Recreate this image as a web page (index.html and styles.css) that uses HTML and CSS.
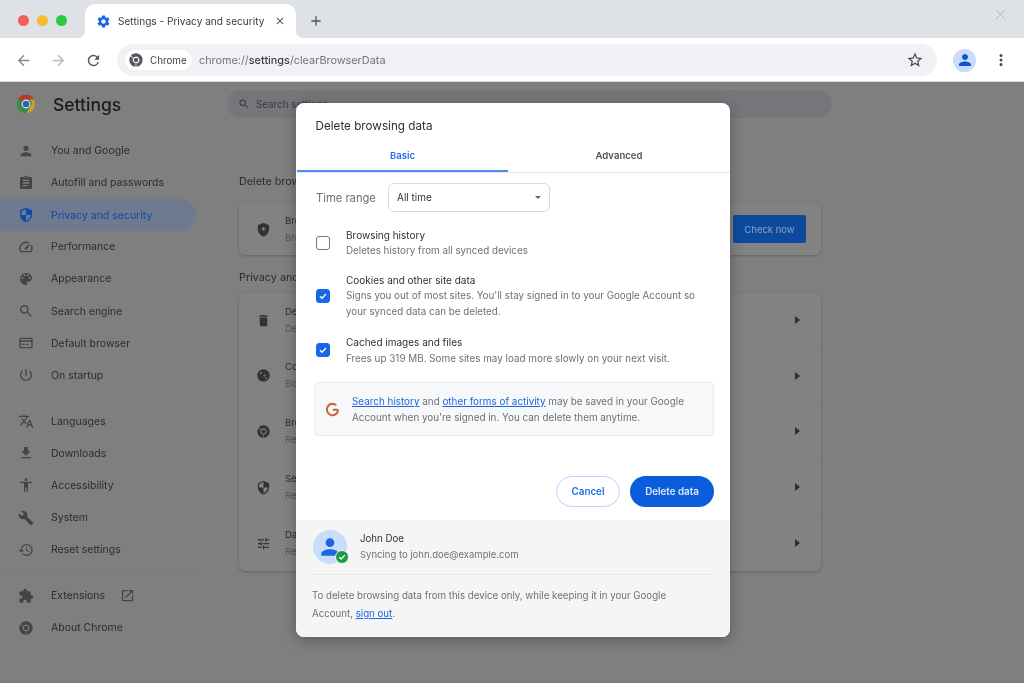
FILE: index.html
```html
<!DOCTYPE html>
<html lang="en">
<head>
<meta charset="utf-8">
<title>Settings - Privacy and security</title>
<link rel="stylesheet" href="styles.css">
</head>
<body>
<svg class="defs" width="0" height="0" aria-hidden="true">
  <symbol id="i-person" viewBox="0 0 24 24"><path d="M12 12c2.21 0 4-1.79 4-4s-1.79-4-4-4-4 1.79-4 4 1.79 4 4 4zm0 2c-2.67 0-8 1.34-8 4v2h16v-2c0-2.66-5.33-4-8-4z"/></symbol>
  <symbol id="i-assign" viewBox="0 0 24 24"><path d="M19 3h-4.18C14.4 1.84 13.3 1 12 1c-1.3 0-2.4.84-2.82 2H5c-1.1 0-2 .9-2 2v14c0 1.1.9 2 2 2h14c1.1 0 2-.9 2-2V5c0-1.1-.9-2-2-2zm-7 0c.55 0 1 .45 1 1s-.45 1-1 1-1-.45-1-1 .45-1 1-1zm2 14H7v-2h7v2zm3-4H7v-2h10v2zm0-4H7V7h10v2z"/></symbol>
  <symbol id="i-security" viewBox="0 0 24 24"><path d="M12 1L3 5v6c0 5.55 3.84 10.74 9 12 5.16-1.26 9-6.45 9-12V5l-9-4zm0 10.99h7c-.53 4.12-3.28 7.79-7 8.94V12H5V6.3l7-3.11v8.8z"/></symbol>
  <symbol id="i-speed" viewBox="0 0 24 24"><path d="M20.38 8.57l-1.23 1.85a8 8 0 0 1-.22 7.58H5.07A8 8 0 0 1 15.58 6.85l1.85-1.23A10 10 0 0 0 3.35 19a2 2 0 0 0 1.72 1h13.85a2 2 0 0 0 1.74-1 10 10 0 0 0-.27-10.44zm-9.79 6.84a2 2 0 0 0 2.83 0l5.66-8.49-8.49 5.66a2 2 0 0 0 0 2.83z"/></symbol>
  <symbol id="i-palette" viewBox="0 0 24 24"><path d="M12 3a9 9 0 0 0 0 18c.83 0 1.5-.67 1.5-1.5 0-.39-.15-.74-.39-1.01-.23-.26-.38-.61-.38-.99 0-.83.67-1.5 1.5-1.5H16c2.76 0 5-2.24 5-5 0-4.42-4.03-8-9-8zm-5.5 9c-.83 0-1.5-.67-1.5-1.5S5.67 9 6.5 9 8 9.67 8 10.5 7.33 12 6.5 12zm3-4C8.67 8 8 7.33 8 6.5S8.67 5 9.5 5s1.5.67 1.5 1.5S10.33 8 9.5 8zm5 0c-.83 0-1.5-.67-1.5-1.5S13.67 5 14.5 5s1.5.67 1.5 1.5S15.33 8 14.5 8zm3 4c-.83 0-1.5-.67-1.5-1.5S16.67 9 17.5 9s1.5.67 1.5 1.5-.67 1.5-1.5 1.5z"/></symbol>
  <symbol id="i-search" viewBox="0 0 24 24"><path d="M15.5 14h-.79l-.28-.27A6.47 6.47 0 0 0 16 9.5 6.5 6.5 0 1 0 9.5 16c1.61 0 3.09-.59 4.23-1.57l.27.28v.79l5 4.99L20.49 19l-4.99-5zm-6 0C7.01 14 5 11.99 5 9.5S7.01 5 9.5 5 14 7.01 14 9.5 11.99 14 9.5 14z"/></symbol>
  <symbol id="i-web" viewBox="0 0 24 24"><path d="M20 4H4c-1.1 0-1.99.9-1.99 2L2 18c0 1.1.9 2 2 2h16c1.1 0 2-.9 2-2V6c0-1.1-.9-2-2-2zm0 14H4v-8h16v8zm0-10H4V6h16v2zM6 13h4v2H6zm6 0h4v2h-4z"/></symbol>
  <symbol id="i-power" viewBox="0 0 24 24"><path d="M13 3h-2v10h2V3zm4.83 2.17l-1.42 1.42A6.92 6.92 0 0 1 19 12c0 3.87-3.13 7-7 7A6.995 6.995 0 0 1 7.58 6.58L6.17 5.17A8.932 8.932 0 0 0 3 12a9 9 0 0 0 18 0c0-2.74-1.23-5.18-3.17-6.83z"/></symbol>
  <symbol id="i-translate" viewBox="0 0 24 24"><path d="M12.87 15.07l-2.54-2.51.03-.03A17.52 17.52 0 0 0 14.07 6H17V4h-7V2H8v2H1v2h11.17C11.5 7.92 10.44 9.75 9 11.35 8.07 10.32 7.3 9.19 6.69 8h-2c.73 1.63 1.73 3.17 2.98 4.56l-5.09 5.02L4 19l5-5 3.11 3.11.76-2.04zM18.5 10h-2L12 22h2l1.12-3h4.75L21 22h2l-4.5-12zm-2.62 7l1.62-4.33L19.12 17h-3.24z"/></symbol>
  <symbol id="i-download" viewBox="0 0 24 24"><path d="M19 9h-4V3H9v6H5l7 7 7-7zM5 18v2h14v-2H5z"/></symbol>
  <symbol id="i-access" viewBox="0 0 24 24"><path d="M12 2c1.1 0 2 .9 2 2s-.9 2-2 2-2-.9-2-2 .9-2 2-2zm9 7h-6v13h-2v-6h-2v6H9V9H3V7h18v2z"/></symbol>
  <symbol id="i-wrench" viewBox="0 0 24 24"><path d="M22.7 19l-9.1-9.1c.9-2.3.4-5-1.5-6.9-2-2-5-2.4-7.4-1.3L9 6 6 9 1.6 4.7C.4 7.1.9 10.1 2.9 12.1c1.9 1.9 4.6 2.4 6.9 1.5l9.1 9.1c.4.4 1 .4 1.4 0l2.3-2.3c.5-.4.5-1.1.1-1.4z"/></symbol>
  <symbol id="i-restore" viewBox="0 0 24 24"><path d="M13 3a9 9 0 0 0-9 9H1l3.89 3.89.07.14L9 12H6c0-3.87 3.13-7 7-7s7 3.13 7 7-3.13 7-7 7c-1.93 0-3.68-.79-4.94-2.06l-1.42 1.42A8.954 8.954 0 0 0 13 21a9 9 0 0 0 0-18zm-1 5v5l4.28 2.54.72-1.21-3.5-2.08V8H12z"/></symbol>
  <symbol id="i-ext" viewBox="0 0 24 24"><path d="M20.5 11H19V7c0-1.1-.9-2-2-2h-4V3.5a2.5 2.5 0 0 0-5 0V5H4c-1.1 0-1.99.9-1.99 2v3.8H3.5c1.49 0 2.7 1.21 2.7 2.7s-1.21 2.7-2.7 2.7H2V20c0 1.1.9 2 2 2h3.8v-1.5c0-1.49 1.21-2.7 2.7-2.7 1.49 0 2.7 1.21 2.7 2.7V22H17c1.1 0 2-.9 2-2v-4h1.5a2.5 2.5 0 0 0 0-5z"/></symbol>
  <symbol id="i-open" viewBox="0 0 24 24"><path d="M19 19H5V5h7V3H5a2 2 0 0 0-2 2v14a2 2 0 0 0 2 2h14c1.1 0 2-.9 2-2v-7h-2v7zM14 3v2h3.59l-9.83 9.83 1.41 1.41L19 6.41V10h2V3h-7z"/></symbol>
  <symbol id="i-chrome" viewBox="0 0 24 24"><circle cx="12" cy="12" r="7.500" fill="none" stroke="currentColor" stroke-width="5" stroke-dasharray="14.700 1" transform="rotate(-28 12 12)"/><circle cx="12" cy="12" r="3.400" fill="currentColor"/></symbol>
  <symbol id="i-delete" viewBox="0 0 24 24"><path d="M6 19c0 1.1.9 2 2 2h8c1.1 0 2-.9 2-2V7H6v12zM19 4h-3.5l-1-1h-5l-1 1H5v2h14V4z"/></symbol>
  <symbol id="i-cookie" viewBox="0 0 24 24"><path fill-rule="evenodd" d="M12 2a10 10 0 1 0 0 20 10 10 0 0 0 0-20zM8 6.500a1.500 1.500 0 1 1 0 3 1.500 1.500 0 0 1 0-3zm5.500 4a1.600 1.600 0 1 1 0 3.200 1.600 1.600 0 0 1 0-3.200zm3 4.500a1.500 1.500 0 1 1 0 3 1.500 1.500 0 0 1 0-3z"/></symbol>
  <symbol id="i-shield" viewBox="0 0 24 24"><path fill-rule="evenodd" d="M12 1L3 5v6c0 5.550 3.840 10.740 9 12 5.160-1.260 9-6.450 9-12V5l-9-4zm-1 9V8h2v2h2v2h-2v2h-2v-2H9v-2z"/></symbol>
  <symbol id="i-tune" viewBox="0 0 24 24"><path d="M3 17v2h6v-2H3zM3 5v2h10V5H3zm10 16v-2h8v-2h-8v-2h-2v6h2zM7 9v2H3v2h4v2h2V9H7zm14 4v-2H11v2h10zm-6-4h2V7h4V5h-4V3h-2v6z"/></symbol>
  <symbol id="i-star" viewBox="0 0 24 24"><path d="M22 9.24l-7.19-.62L12 2 9.19 8.63 2 9.24l5.46 4.73L5.82 21 12 17.27 18.18 21l-1.63-7.03L22 9.24zM12 15.4l-3.76 2.27 1-4.28-3.32-2.88 4.38-.38L12 6.1l1.71 4.04 4.38.38-3.32 2.88 1 4.28L12 15.4z"/></symbol>
  <symbol id="i-gear" viewBox="0 0 24 24"><path d="M19.14 12.94c.04-.3.06-.61.06-.94 0-.32-.02-.64-.07-.94l2.03-1.58a.49.49 0 0 0 .12-.61l-1.92-3.32a.488.488 0 0 0-.59-.22l-2.39.96c-.5-.38-1.03-.7-1.62-.94l-.36-2.54a.484.484 0 0 0-.48-.41h-3.84c-.24 0-.43.17-.47.41l-.36 2.54c-.59.24-1.13.57-1.62.94l-2.39-.96c-.22-.08-.47 0-.59.22L2.74 8.87c-.12.21-.08.47.12.61l2.03 1.58c-.05.3-.09.63-.09.94s.02.64.07.94l-2.03 1.58a.49.49 0 0 0-.12.61l1.92 3.32c.12.22.37.29.59.22l2.39-.96c.5.38 1.03.7 1.62.94l.36 2.54c.05.24.24.41.48.41h3.84c.24 0 .44-.17.47-.41l.36-2.54c.59-.24 1.13-.56 1.62-.94l2.39.96c.22.08.47 0 .59-.22l1.92-3.32c.12-.22.07-.47-.12-.61l-2.01-1.58zM12 15.6c-1.98 0-3.6-1.62-3.6-3.6s1.62-3.6 3.6-3.6 3.6 1.62 3.6 3.6-1.62 3.6-3.6 3.6z"/></symbol>
  <symbol id="i-refresh" viewBox="0 0 24 24"><path d="M17.65 6.35A7.958 7.958 0 0 0 12 4c-4.42 0-7.99 3.58-7.99 8s3.57 8 7.99 8c3.73 0 6.84-2.55 7.73-6h-2.08A5.99 5.99 0 0 1 12 18c-3.31 0-6-2.69-6-6s2.69-6 6-6c1.66 0 3.14.69 4.22 1.78L13 11h7V4l-2.35 2.35z"/></symbol>
  <symbol id="i-back" viewBox="0 0 24 24"><path d="M20 11H7.83l5.59-5.59L12 4l-8 8 8 8 1.41-1.41L7.83 13H20v-2z"/></symbol>
  <symbol id="i-forward" viewBox="0 0 24 24"><path d="M12 4l-1.41 1.41L16.17 11H4v2h12.17l-5.58 5.59L12 20l8-8z"/></symbol>
  <symbol id="i-close" viewBox="0 0 24 24"><path d="M19 6.41L17.59 5 12 10.59 6.41 5 5 6.41 10.59 12 5 17.59 6.41 19 12 13.41 17.59 19 19 17.59 13.41 12z"/></symbol>
  <symbol id="i-plus" viewBox="0 0 24 24"><path d="M19 13h-6v6h-2v-6H5v-2h6V5h2v6h6v2z"/></symbol>
  <symbol id="i-dots" viewBox="0 0 24 24"><path d="M12 8a2 2 0 1 0 0-4 2 2 0 0 0 0 4zm0 2a2 2 0 1 0 0 4 2 2 0 0 0 0-4zm0 6a2 2 0 1 0 0 4 2 2 0 0 0 0-4z"/></symbol>
</svg>

<div class="window">
  <header class="tabstrip">
    <div class="lights">
      <span class="light red"></span><span class="light amber"></span><span class="light green"></span>
    </div>
    <div class="tab">
      <svg class="tab-gear"><use href="#i-gear"/></svg>
      <span class="tab-title">Settings - Privacy and security</span>
      <svg class="tab-close"><use href="#i-close"/></svg>
    </div>
    <svg class="new-tab"><use href="#i-plus"/></svg>
    <svg class="win-close" viewBox="0 0 12 12"><path d="M1 1l10 10M11 1L1 11"/></svg>
  </header>

  <nav class="toolbar">
    <svg class="tb-icon"><use href="#i-back"/></svg>
    <svg class="tb-icon faint"><use href="#i-forward"/></svg>
    <svg class="tb-icon dark"><use href="#i-refresh"/></svg>
    <div class="omnibox">
      <div class="chip">
        <svg class="chip-icon"><use href="#i-chrome"/></svg>
        <span>Chrome</span>
      </div>
      <div class="url">chrome://<b>settings</b>/clearBrowserData</div>
      <svg class="star"><use href="#i-star"/></svg>
    </div>
    <div class="avatar"><svg><use href="#i-person"/></svg></div>
    <svg class="kebab"><use href="#i-dots"/></svg>
  </nav>

  <div class="page">
    <aside class="sidebar">
      <div class="brand">
        <svg class="logo" viewBox="0 0 24 24">
          <circle cx="12" cy="12" r="11" fill="#3c8a4c"/>
          <path d="M12 1a11 11 0 0 1 9.5 5.5H12a5.5 5.5 0 0 0-5 3L3.400 5A11 11 0 0 1 12 1z" fill="#b8382c"/>
          <path d="M21.500 6.500A11 11 0 0 1 12.500 23l4.500-8A5.500 5.500 0 0 0 16.500 6.500z" fill="#c9a02f"/>
          <circle cx="12" cy="12" r="5.300" fill="#e6e6e6"/>
          <circle cx="12" cy="12" r="4" fill="#2a66b8"/>
        </svg>
        <span class="brand-name">Settings</span>
      </div>
      <ul class="menu">
        <li class="item"><svg><use href="#i-person"/></svg>You and Google</li>
        <li class="item"><svg><use href="#i-assign"/></svg>Autofill and passwords</li>
        <li class="item active"><svg><use href="#i-security"/></svg>Privacy and security</li>
        <li class="item"><svg><use href="#i-speed"/></svg>Performance</li>
        <li class="item"><svg><use href="#i-palette"/></svg>Appearance</li>
        <li class="item"><svg><use href="#i-search"/></svg>Search engine</li>
        <li class="item"><svg><use href="#i-web"/></svg>Default browser</li>
        <li class="item"><svg><use href="#i-power"/></svg>On startup</li>
      </ul>
      <ul class="menu second">
        <li class="item"><svg><use href="#i-translate"/></svg>Languages</li>
        <li class="item"><svg><use href="#i-download"/></svg>Downloads</li>
        <li class="item"><svg><use href="#i-access"/></svg>Accessibility</li>
        <li class="item"><svg><use href="#i-wrench"/></svg>System</li>
        <li class="item"><svg><use href="#i-restore"/></svg>Reset settings</li>
      </ul>
      <ul class="menu third">
        <li class="item"><svg><use href="#i-ext"/></svg>Extensions<svg class="open"><use href="#i-open"/></svg></li>
        <li class="item"><svg><use href="#i-chrome"/></svg>About Chrome</li>
      </ul>
    </aside>

    <main class="content">
      <div class="searchbar">
        <svg><use href="#i-search"/></svg>
        <span>Search settings</span>
      </div>
      <h2 class="section">Delete browsing data</h2>
      <section class="card check-card">
        <svg class="row-icon"><use href="#i-shield"/></svg>
        <div class="row-text"><div class="rt">Browser safety</div><div class="rs">Browser checks</div></div>
        <div class="check-now">Check now</div>
      </section>
      <h2 class="section privacy">Privacy and security</h2>
      <section class="card">
        <div class="row"><svg class="row-icon"><use href="#i-delete"/></svg><div class="row-text"><div class="rt">Delete data</div><div class="rs">Delete history</div></div><span class="arrow"></span></div>
        <div class="row"><svg class="row-icon"><use href="#i-cookie"/></svg><div class="row-text"><div class="rt">Cookies</div><div class="rs">Block cookies</div></div><span class="arrow"></span></div>
        <div class="row"><svg class="row-icon"><use href="#i-chrome"/></svg><div class="row-text"><div class="rt">Browser ads</div><div class="rs">Review ads</div></div><span class="arrow"></span></div>
        <div class="row"><svg class="row-icon"><use href="#i-security"/></svg><div class="row-text"><div class="rt">Security</div><div class="rs">Review safety</div></div><span class="arrow"></span></div>
        <div class="row"><svg class="row-icon"><use href="#i-tune"/></svg><div class="row-text"><div class="rt">Data settings</div><div class="rs">Review sites</div></div><span class="arrow"></span></div>
      </section>
    </main>

    <div class="dialog">
      <div class="dialog-body">
        <h1 class="d-title">Delete browsing data</h1>
        <div class="tabs">
          <div class="d-tab selected">Basic</div>
          <div class="d-tab">Advanced</div>
        </div>
        <div class="range">
          <span class="range-label">Time range</span>
          <div class="select"><span>All time</span><i class="caret"></i></div>
        </div>
        <div class="opt first">
          <span class="box"></span>
          <div><div class="o-title">Browsing history</div><div class="o-sub">Deletes history from all synced devices</div></div>
        </div>
        <div class="opt">
          <span class="box on"><svg viewBox="0 0 14 14"><path d="M3.500 7.200l2.400 2.400 4.600-5"/></svg></span>
          <div><div class="o-title">Cookies and other site data</div><div class="o-sub">Signs you out of most sites. You'll stay signed in to your Google Account so your synced data can be deleted.</div></div>
        </div>
        <div class="opt last">
          <span class="box on"><svg viewBox="0 0 14 14"><path d="M3.500 7.200l2.400 2.400 4.600-5"/></svg></span>
          <div><div class="o-title">Cached images and files</div><div class="o-sub">Frees up 319 MB. Some sites may load more slowly on your next visit.</div></div>
        </div>
        <div class="notice">
          <svg class="g" viewBox="0 0 24 24"><path d="M20 12.400a8 8 0 1 1-2.600-6.300M12.500 12.400H20"/></svg>
          <p><a>Search history</a> and <a>other forms of activity</a> may be saved in your Google Account when you're signed in. You can delete them anytime.</p>
        </div>
        <div class="actions">
          <button class="btn ghost">Cancel</button>
          <button class="btn solid">Delete data</button>
        </div>
      </div>
      <footer class="d-foot">
        <div class="account">
          <div class="acc-pic">
            <svg class="acc-person"><use href="#i-person"/></svg>
            <span class="badge"><svg viewBox="0 0 14 14"><path d="M3.800 7.200l2.200 2.200 4.200-4.600"/></svg></span>
          </div>
          <div><div class="acc-name">John Doe</div><div class="acc-mail">Syncing to john.doe@example.com</div></div>
        </div>
        <p class="foot-note">To delete browsing data from this device only, while keeping it in your Google Account, <a>sign out</a>.</p>
      </footer>
    </div>
  </div>
</div>
</body>
</html>
```

FILE: styles.css
```css
* { box-sizing: border-box; }
html, body { margin: 0; padding: 0; }
body {
  width: 1024px;
  height: 683px;
  overflow: hidden;
  font-family: Inter, "Liberation Sans", sans-serif;
  color: #222;
}
.defs { position: absolute; }
ul { list-style: none; margin: 0; padding: 0; }
h1, h2, p { margin: 0; font-weight: 400; }
.window { display: flex; flex-direction: column; height: 683px; filter: blur(.35px); }

/* tab strip */
.tabstrip {
  height: 38px;
  background: #dee1e6;
  display: flex;
  align-items: flex-end;
  padding-left: 18px;
}
.lights { display: flex; gap: 8px; align-self: center; margin-top: 2px; width: 67px; }
.light { width: 11px; height: 11px; border-radius: 50%; }
.red { background: #f65d5b; }
.amber { background: #f8bc2f; }
.green { background: #2cc840; }
.tab {
  position: relative;
  width: 211px;
  height: 34px;
  background: #fff;
  border-radius: 10px 10px 0 0;
  display: flex;
  align-items: center;
  padding-left: 11px;
  font-size: 10.100px;
  color: #3a3c40;
}
.tab::before, .tab::after {
  content: "";
  position: absolute;
  bottom: 0;
  width: 8px;
  height: 8px;
}
.tab::before { left: -8px; background: radial-gradient(circle at 0 0, transparent 8px, #fff 8.500px); }
.tab::after { right: -8px; background: radial-gradient(circle at 100% 0, transparent 8px, #fff 8.500px); }
.tab-gear { width: 15px; height: 15px; fill: #1a66e0; flex: none; }
.tab-title { margin-left: 7px; white-space: nowrap; }
.tab-close { width: 12px; height: 12px; fill: #55585c; margin-left: 10px; flex: none; }
.new-tab { width: 16px; height: 16px; fill: #55585c; margin: 0 0 9px 12px; }
.win-close { width: 11px; height: 11px; fill: none; stroke: #b0b3b8; stroke-width: 1; margin: 0 18px 18px auto; }

/* toolbar */
.toolbar {
  height: 44px;
  background: #fff;
  border-bottom: 1px solid #d4d4d4;
  display: flex;
  align-items: center;
  padding: 1px 0 0 15px;
}
.tb-icon { width: 17px; height: 17px; fill: #85888c; margin-right: 18px; flex: none; }
.tb-icon.faint { fill: #b8babd; }
.tb-icon.dark { fill: #55575b; margin-right: 15px; }
.omnibox {
  width: 820px;
  height: 32px;
  border-radius: 16px;
  background: #eff1f4;
  display: flex;
  align-items: center;
  padding: 0 13px 0 8px;
  flex: none;
}
.chip {
  height: 20px;
  width: 67px;
  border-radius: 10px;
  background: #fff;
  display: flex;
  align-items: center;
  padding-left: 3px;
  font-size: 9.800px;
  color: #3c3e42;
  gap: 6px;
}
.chip-icon { width: 16px; height: 16px; color: #55585c; }
.url { margin-left: 7px; font-size: 10.850px; color: #707378; white-space: nowrap; }
.url b { font-weight: 500; color: #3c3e42; }
.star { width: 18px; height: 18px; fill: #45474b; margin-left: auto; }
.avatar {
  width: 23px;
  height: 23px;
  border-radius: 50%;
  background: #c9dcfb;
  margin-left: 16px;
  display: flex;
  align-items: center;
  justify-content: center;
  flex: none;
}
.avatar svg { width: 18px; height: 18px; fill: #0b57d0; }
.kebab { width: 18px; height: 18px; fill: #45474b; margin-left: 16px; flex: none; }

/* page behind the dialog */
.page {
  position: relative;
  flex: 1;
  display: flex;
  background: #7f7f7f;
  overflow: hidden;
}
.sidebar { width: 227px; flex: none; }
.brand { height: 44px; display: flex; align-items: center; padding-left: 16px; }
.logo { width: 20px; height: 20px; }
.brand-name { margin-left: 17px; font-size: 17.500px; font-weight: 500; color: #1c1c1c; }
.menu { padding-top: 8.600px; }
.item {
  height: 32.100px;
  display: flex;
  align-items: center;
  padding-left: 18px;
  font-size: 10.500px;
  color: #2c2c2c;
  white-space: nowrap;
}
.item > svg:first-child { width: 16px; height: 16px; fill: #444; color: #444; margin-right: 17px; flex: none; }
.item.active {
  width: 196px;
  height: 32px;
  padding-top: 1px;
  background: #6e7a8e;
  border-radius: 0 16px 16px 0;
  color: #114aa8;
}
.item.active > svg:first-child { fill: #114aa8; }
.second { padding-top: 14px; padding-bottom: 6px; border-bottom: 1px solid #7a7a7a; width: 200px; }
.third { padding-top: 7px; }
.open { width: 15px; height: 15px; fill: #444; margin-left: 15px; }

.content { flex: none; width: 605px; padding-top: 8px; }
.searchbar {
  height: 28px;
  border-radius: 14px;
  background: #757679;
  display: flex;
  align-items: center;
  padding-left: 11px;
  font-size: 9.800px;
  color: #3a3a3a;
  gap: 6px;
}
.searchbar svg { width: 12px; height: 12px; fill: #3a3a3a; }
.section { margin: 57px 0 0 12px; font-size: 10.800px; color: #2c2c2c; line-height: 14px; }
.section.privacy { margin-top: 16px; }
.card {
  margin: 15px 0 0 12px;
  width: 582px;
  background: #828282;
  border-radius: 6px;
  box-shadow: 0 1px 3px rgba(0, 0, 0, .22);
}
.privacy + .card { margin-top: 8px; }
.check-card { height: 52px; display: flex; align-items: center; padding-right: 15px; margin-top: 14px; }
.row { height: 55.600px; display: flex; align-items: center; border-bottom: 1px solid #7c7c7c; padding-right: 21px; }
.row:last-child { border-bottom: 0; }
.row-icon { width: 15px; height: 15px; fill: #333; color: #333; margin-left: 17px; flex: none; }
.row-text { margin-left: 14px; font-size: 9.500px; white-space: nowrap; }
.rt { color: #2c2c2c; line-height: 14px; }
.rs { color: #555; line-height: 14px; margin-top: 3px; }
.arrow {
  margin-left: auto;
  width: 0;
  height: 0;
  border-left: 5px solid #2d2f35;
  border-top: 4px solid transparent;
  border-bottom: 4px solid transparent;
}
.check-now {
  margin-left: auto;
  width: 73px;
  height: 28px;
  border-radius: 2px;
  background: #0d4a9e;
  color: #8ba1c6;
  font-size: 9.500px;
  display: flex;
  align-items: center;
  justify-content: center;
}

/* dialog */
.dialog {
  position: absolute;
  left: 296px;
  top: 21px;
  width: 434px;
  height: 534px;
  border-radius: 8px;
  background: #fff;
  box-shadow: 0 3px 14px rgba(0, 0, 0, .3);
  overflow: hidden;
  display: flex;
  flex-direction: column;
}
.dialog-body { height: 417px; flex: none; }
.d-title { font-size: 11.700px; color: #2e3033; padding: 16px 0 0 19.500px; line-height: 15px; }
.tabs {
  display: flex;
  margin-top: 8px;
  margin-left: 1px;
  border-bottom: 1px solid #e2e4e7;
}
.d-tab {
  flex: 1;
  height: 30px;
  text-align: center;
  line-height: 28px;
  font-size: 9.600px;
  font-weight: 600;
  color: #505256;
}
.d-tab.selected { flex: none; width: 211px; color: #2a72e8; border-bottom: 2px solid #4d8df0; margin-bottom: -1px; }
.range { display: flex; align-items: center; margin: 10px 0 0 20px; }
.range-label { width: 72px; font-size: 11.200px; color: #6d7074; }
.select {
  width: 162px;
  height: 29px;
  border: 1px solid #d8dadd;
  border-radius: 6px;
  display: flex;
  align-items: center;
  justify-content: space-between;
  padding: 0 8px 1px;
  font-size: 10px;
  color: #333;
}
.caret { border-top: 3.500px solid #666; border-left: 3.500px solid transparent; border-right: 3.500px solid transparent; }
.opt { display: flex; align-items: center; padding-left: 20px; margin-top: 13px; }
.opt.first { margin-top: 15px; }
.opt.last { margin-top: 14px; }
.box {
  width: 14px;
  height: 14px;
  flex: none;
  margin-right: 16px;
  border: 1.500px solid #74777b;
  border-radius: 3px;
  display: flex;
}
.box.on { background: #1a66e8; border-color: #1a66e8; }
.box svg { width: 100%; height: 100%; fill: none; stroke: #fff; stroke-width: 1.500; }
.o-title { font-size: 10px; line-height: 16px; color: #2e3033; }
.o-sub { font-size: 9.800px; line-height: 16px; color: #6d7074; width: 362px; }
.last .o-sub { font-size: 9.900px; }
.notice {
  margin: 16px 16px 0 18px;
  height: 54px;
  border: 1px solid #e8eaed;
  border-radius: 4px;
  background: #f7f8f9;
  display: flex;
  align-items: center;
  padding-left: 9px;
}
.g { width: 17px; height: 17px; fill: none; stroke: #c4673f; stroke-width: 3; flex: none; }
.notice p { margin-left: 11px; width: 350px; font-size: 9.900px; line-height: 16px; color: #6d7074; }
a { color: #1a66e8; text-decoration: underline; }
.actions { display: flex; justify-content: flex-end; gap: 10px; margin: 40px 16px 0 0; }
.btn { height: 31px; border-radius: 16px; font: 600 9.800px Inter, "Liberation Sans", sans-serif; padding: 0; }
.ghost { width: 64px; background: #fff; border: 1px solid #bcd3fa; color: #1f6de0; }
.solid { width: 84px; background: #0b5ddc; border: 0; color: #dbe7fb; }

.d-foot { flex: 1; background: #f5f5f5; padding: 10px 16px 0 16px; }
.account { display: flex; align-items: center; border-bottom: 1px solid #e6e6e6; height: 45px; padding-bottom: 10px; }
.acc-pic {
  position: relative;
  width: 34px;
  height: 34px;
  border-radius: 50%;
  background: #c9dcfb;
  display: flex;
  align-items: center;
  justify-content: center;
  margin: 0 13px 0 1px;
  flex: none;
}
.acc-person { width: 26px; height: 26px; fill: #1a66e0; }
.badge {
  position: absolute;
  right: -2px;
  bottom: 0;
  width: 14px;
  height: 14px;
  border-radius: 50%;
  background: #1a9b47;
  border: 1px solid #f5f5f5;
}
.badge svg { display: block; width: 100%; height: 100%; fill: none; stroke: #fff; stroke-width: 1.600; }
.acc-name { font-size: 9.700px; line-height: 16px; color: #2e3033; }
.acc-mail { font-size: 9.500px; line-height: 16px; color: #6d7074; }
.foot-note { margin-top: 12px; width: 365px; font-size: 9.700px; line-height: 18px; color: #6d7074; }
```
